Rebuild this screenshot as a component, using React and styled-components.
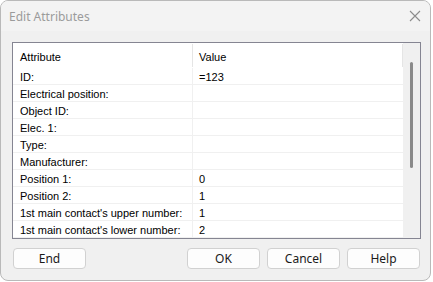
import React from "react";
import styled, { createGlobalStyle } from "styled-components";

const GlobalStyle = createGlobalStyle`
  html, body {
    margin: 0;
    background: #ffffff;
  }
`;

const Window = styled.div`
  box-sizing: border-box;
  width: 431px;
  height: 281px;
  border: 1px solid #b9b9b9;
  border-radius: 8px;
  overflow: hidden;
  background: #f0f0f0;
  display: flex;
  flex-direction: column;
  font-family: "Noto Sans", "Open Sans", sans-serif;
`;

const TitleBar = styled.div`
  height: 30px;
  flex: none;
  background: #f3f3f3;
  display: flex;
  align-items: center;
  justify-content: space-between;
  padding: 0 8px 0 8px;
  font-size: 12px;
  color: #9b9b9b;
`;

const CloseButton = styled.div`
  width: 12px;
  height: 12px;
  display: flex;
  margin-right: 1px;
`;

const Content = styled.div`
  padding: 11px 9px 0 11px;
  display: flex;
  flex-direction: column;
`;

const ListBox = styled.div`
  box-sizing: border-box;
  height: 197px;
  border: 1px solid #858592;
  background: #ffffff;
  display: flex;
  font-family: "Liberation Sans", Arial, sans-serif;
  font-size: 11px;
  color: #000;
`;

const Table = styled.div`
  flex: 1;
  display: grid;
  grid-template-columns: 180px 1fr;
  grid-template-rows: 25px;
  grid-auto-rows: 17px;
  align-content: start;
`;

const HeaderCell = styled.div`
  box-sizing: border-box;
  display: flex;
  align-items: center;
  padding-left: ${(p) => (p.$first ? "7px" : "6px")};
  padding-top: 2px;
  border-right: 1px solid #e5e5e5;
  margin: 1px 0 1px;
`;

const Cell = styled.div`
  box-sizing: border-box;
  display: flex;
  align-items: center;
  padding-left: ${(p) => (p.$first ? "7px" : "6px")};
  padding-top: 1px;
  border-bottom: 1px solid #f0f0f0;
  border-right: ${(p) => (p.$first ? "1px solid #f0f0f0" : "none")};
  white-space: nowrap;
`;

const Scrollbar = styled.div`
  width: 17px;
  flex: none;
  background: #f0f0f0;
  position: relative;
`;

const Thumb = styled.div`
  position: absolute;
  left: 7px;
  top: 19px;
  width: 3px;
  height: 106px;
  border-radius: 2px;
  background: #8a8a8a;
`;

const Footer = styled.div`
  display: flex;
  margin-top: 9px;
  gap: 7px;
  padding: 0 1px;
`;

const Spacer = styled.div`
  flex: 1;
`;

const Button = styled.button`
  box-sizing: border-box;
  width: 73px;
  height: 21px;
  margin: 0;
  padding: 0;
  border: 1px solid #d1d1d1;
  border-radius: 4px;
  background: #fdfdfd;
  font-family: "Noto Sans", "Open Sans", sans-serif;
  font-size: 12px;
  color: #1a1a1a;
  line-height: 19px;
`;

const rows = [
  ["ID:", "=123"],
  ["Electrical position:", ""],
  ["Object ID:", ""],
  ["Elec. 1:", ""],
  ["Type:", ""],
  ["Manufacturer:", ""],
  ["Position 1:", "0"],
  ["Position 2:", "1"],
  ["1st main contact's upper number:", "1"],
  ["1st main contact's lower number:", "2"],
];

export default function App() {
  return (
    <>
      <GlobalStyle />
      <Window>
        <TitleBar>
          <span>Edit Attributes</span>
          <CloseButton>
            <svg width="12" height="12" viewBox="0 0 12 12">
              <path d="M1 1 L11 11 M11 1 L1 11" stroke="#8c8c8c" strokeWidth="1.1" fill="none" />
            </svg>
          </CloseButton>
        </TitleBar>
        <Content>
          <ListBox>
            <Table>
              <HeaderCell $first>Attribute</HeaderCell>
              <HeaderCell>Value</HeaderCell>
              {rows.map(([name, value]) => (
                <React.Fragment key={name}>
                  <Cell $first>{name}</Cell>
                  <Cell>{value}</Cell>
                </React.Fragment>
              ))}
            </Table>
            <Scrollbar>
              <Thumb />
            </Scrollbar>
          </ListBox>
          <Footer>
            <Button>End</Button>
            <Spacer />
            <Button>OK</Button>
            <Button>Cancel</Button>
            <Button>Help</Button>
          </Footer>
        </Content>
      </Window>
    </>
  );
}
